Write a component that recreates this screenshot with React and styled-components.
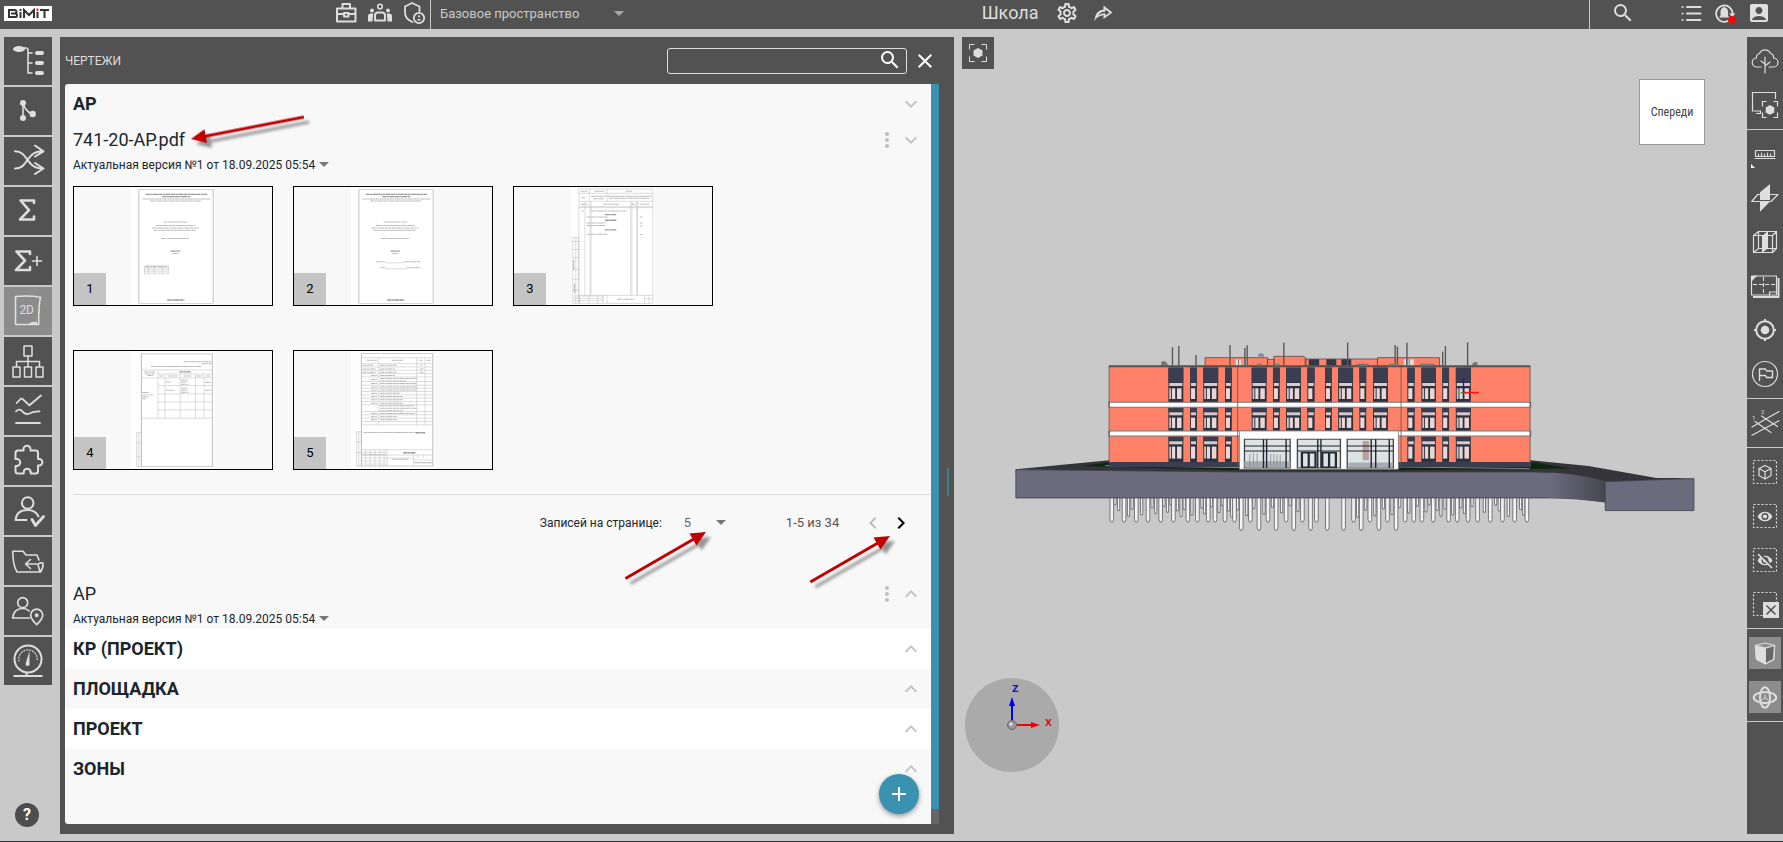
import React from 'react';
import styled, { createGlobalStyle } from 'styled-components';
import {
  MdAccountBox,
  MdAdd,
  MdChevronLeft,
  MdChevronRight,
  MdClose,
  MdExpandLess,
  MdExpandMore,
  MdMoreVert,
  MdOutlineSettings,
  MdSearch,
} from 'react-icons/md';

const GlobalStyle = createGlobalStyle`
  * {
    box-sizing: border-box;
  }

  body {
    margin: 0;
    font-family: Roboto, 'Liberation Sans', sans-serif;
    font-size: 12px;
    color: #1b262c;
    background: #c9c9c9;
  }

  button,
  input,
  select {
    font-family: inherit;
  }
`;

const Page = styled.div`
  position: relative;
  display: flex;
  flex-direction: column;
  min-height: 100vh;
  border-bottom: 1px solid #33363d;
`;

const Header = styled.header`
  display: grid;
  grid-template-columns: 431px minmax(0, 1fr) 45%;
  height: 29px;
  color: #dedede;
  background: #525252;
`;

const HeaderTools = styled.div`
  display: flex;
  align-items: center;
  gap: 10px;
  padding: 0 4px 4px;
  border-right: 1px solid #c9c9c9;
`;

const Logo = styled.a`
  display: block;
  width: 48px;
  height: 15px;
  margin: 2px auto 0 0;
`;

const HeaderSpace = styled.div`
  display: flex;
  align-items: center;
  padding: 0 0 2px 9px;
`;

const HeaderRight = styled.div`
  display: flex;
  justify-content: space-between;
`;

const Project = styled.div`
  display: flex;
  align-items: center;
  gap: 12px;
  padding: 0 0 3px 1px;
`;

const ProjectName = styled.h1`
  margin: 0 5px 0 0;
  font-size: 18px;
  line-height: 24px;
  font-weight: 400;
`;

const UserTools = styled.div`
  display: flex;
  align-items: center;
  gap: 10px;
  width: 194px;
  padding: 0 12px 4px 21px;
  border-left: 1px solid #c9c9c9;

  button:first-child {
    margin-right: auto;
  }
`;

const IconButton = styled.button`
  display: flex;
  align-items: center;
  justify-content: center;
  flex: none;
  width: 24px;
  height: 24px;
  padding: 0;
  border: 0;
  color: ${props => props.$color || 'inherit'};
  background: none;
  font-size: 24px;
  cursor: pointer;
`;

const SelectBox = styled.label`
  display: inline-flex;
  align-items: center;
  gap: ${props => props.$gap || '3px'};
  color: ${props => props.$color || '#1b262c'};

  select {
    margin: 0;
    padding: 0;
    border: 0;
    outline: 0;
    appearance: none;
    color: inherit;
    background: transparent;
    font-size: ${props => props.$size || '12px'};
    line-height: 18px;
    cursor: pointer;
  }
`;

const Main = styled.main`
  display: grid;
  grid-template-columns: 60px minmax(0, 41fr) minmax(0, 38fr);
  flex: 1;
`;

const Rail = styled.nav`
  display: flex;
  flex-direction: column;
  gap: 2px;
  padding: 8px 8px 14px 4px;
`;

const RailButton = styled.button`
  width: 48px;
  height: 48px;
  padding: 0;
  border: 0;
  color: #dedede;
  background: ${props => (props.$active ? '#8c8c8c' : '#525252')};
  cursor: pointer;
`;

const HelpButton = styled.button`
  width: 24px;
  height: 24px;
  margin: auto auto 0 11px;
  padding: 0;
  border: 0;
  border-radius: 50%;
  color: #fff;
  background: #4d4d4d;
  font-size: 16px;
  font-weight: 700;
  line-height: 24px;
  cursor: pointer;
`;

const Panel = styled.section`
  position: relative;
  display: flex;
  flex-direction: column;
  margin: 8px 0 7px;
  padding: 0 15px 10px 5px;
  background: #525252;
`;

const PanelHeader = styled.div`
  display: flex;
  align-items: center;
  gap: 6px;
  height: 47px;
  margin-right: 2px;
`;

const PanelTitle = styled.h2`
  margin: 0 auto 0 0;
  font-size: 12px;
  font-weight: 400;
  color: #dedede;
`;

const SearchBox = styled.div`
  display: flex;
  align-items: center;
  width: 240px;
  height: 26px;
  padding: 0 4px 2px 8px;
  border: 1px solid #dedede;
  border-radius: 3px;

  input {
    flex: 1;
    min-width: 0;
    border: 0;
    outline: 0;
    color: #fff;
    background: transparent;
    font-size: 13px;
  }
`;

const PanelBody = styled.div`
  display: flex;
  flex: 1;
`;

const Content = styled.div`
  position: relative;
  flex: 1;
  background: #f8f8f8;
  border-radius: 3px 0 0 3px;
`;

const ScrollTrack = styled.div`
  width: 8px;
  padding-bottom: 15px;
  background: #666;
`;

const ScrollThumb = styled.div`
  height: 100%;
  background: #3b92b0;
`;

const ResizeHandle = styled.div`
  position: absolute;
  top: 431px;
  right: 5px;
  width: 2px;
  height: 28px;
  background: #3b7f97;
`;

const GroupRow = styled.div`
  display: flex;
  align-items: center;
  justify-content: space-between;
  height: 40px;
  padding: 0 8px;
  background: ${props => (props.$light ? '#fff' : 'transparent')};
`;

const GroupName = styled.h3`
  margin: 0 0 2px;
  font-size: 18px;
  font-weight: 700;
`;

const FileHead = styled.div`
  display: flex;
  align-items: center;
  height: 32px;
  padding: 0 8px;
`;

const FileName = styled.h4`
  margin: 0 auto 2px 0;
  font-size: 18px;
  font-weight: 400;
`;

const FileVersion = styled.div`
  display: flex;
  align-items: center;
  height: 19px;
  padding: 0 8px 2px;
`;

const Sheets = styled.div`
  display: flex;
  flex-wrap: wrap;
  gap: 44px 20px;
  max-width: 800px;
  padding: 11px 8px 24px;
`;

const Sheet = styled.button`
  position: relative;
  display: flex;
  justify-content: center;
  width: 200px;
  height: 120px;
  padding: 0;
  border: 1px solid #000;
  background: transparent;
  cursor: pointer;
`;

const SheetNumber = styled.span`
  position: absolute;
  left: 0;
  bottom: 0;
  width: 32px;
  height: 32px;
  color: #000;
  background: #c4c4c4;
  font-size: 13px;
  line-height: 32px;
  text-align: center;
`;

const Pagination = styled.div`
  display: flex;
  align-items: center;
  justify-content: flex-end;
  height: 56px;
  margin: 0 0 28px 8px;
  padding-right: 18px;
  border-top: 1px solid #dcdcdc;
`;

const PageSize = styled.div`
  display: flex;
  align-items: center;
  gap: 22px;
  margin-right: 60px;
`;

const PageRange = styled.span`
  margin-right: 22px;
  font-size: 13px;
  color: #555;
`;

const PageButtons = styled.div`
  display: flex;
  gap: 4px;
`;

const AddButton = styled.button`
  position: absolute;
  right: 12px;
  bottom: 10px;
  display: flex;
  align-items: center;
  justify-content: center;
  width: 40px;
  height: 40px;
  padding: 0;
  border: 0;
  border-radius: 50%;
  color: #fff;
  background: #3b92b0;
  font-size: 24px;
  box-shadow: 0 2px 5px rgba(0, 0, 0, 0.4);
  cursor: pointer;
`;

const Viewer = styled.section`
  display: flex;
  padding-top: 8px;
`;

const Scene = styled.div`
  display: flex;
  flex-direction: column;
  flex: 1;
  min-width: 0;
  padding-bottom: 69px;
`;

const SceneTop = styled.div`
  display: flex;
  align-items: flex-start;
  justify-content: space-between;
  padding: 0 42px 0 8px;
`;

const FocusButton = styled.button`
  width: 32px;
  height: 32px;
  padding: 0;
  border: 0;
  color: #dedede;
  background: #525252;
`;

const ViewCube = styled.button`
  width: 66px;
  height: 66px;
  margin-top: 42px;
  padding: 0;
  border: 1px solid #999;
  color: #444;
  background: #fff;
  font-family: 'Roboto Condensed', Roboto, sans-serif;
  font-size: 12px;
`;

const Model = styled.div`
  margin: 185px 37px auto 46px;

  svg {
    display: block;
    width: 100%;
    height: auto;
  }
`;

const Compass = styled.div`
  width: 94px;
  height: 94px;
  margin-left: 11px;
  border-radius: 50%;
  background: #aaa;
`;

const Toolbar = styled.aside`
  width: 36px;
  margin-bottom: 7px;
  background: #525252;
`;

const ToolGroup = styled.div`
  display: flex;
  flex-direction: column;
  padding: 2px 0;
  border-bottom: 1px solid #c9c9c9;
`;

const Tool = styled.button`
  height: 44px;
  padding: 0;
  border: 0;
  color: #dedede;
  background: ${props => (props.$active ? 'linear-gradient(#8c8c8c, #8c8c8c) center / 32px 32px no-repeat' : 'none')};
  cursor: pointer;
`;

const Markers = styled.svg`
  position: absolute;
  top: 0;
  left: 0;
  width: 100%;
  height: 100%;
  pointer-events: none;
`;

const Line = ({ size = 48, height = size, width = 2, children }) => (
  <svg
    width={size}
    height={height}
    viewBox={`0 0 ${size} ${height}`}
    fill="none"
    stroke="currentColor"
    strokeWidth={width}
    strokeLinecap="round"
    strokeLinejoin="round"
    aria-hidden="true"
  >
    {children}
  </svg>
);

const Caret = () => (
  <svg width="10" height="5" viewBox="0 0 10 5" aria-hidden="true">
    <path d="M0 0h10L5 5z" fill="#777" />
  </svg>
);

const railItems = [
  {
    label: 'Структура',
    icon: (
      <>
        <ellipse cx="15" cy="12" rx="6" ry="3" fill="currentColor" stroke="none" />
        <path d="M19 11h3q2 0 2 2v23h4M24 16h4M24 26h4" strokeWidth="1.6" />
        <path d="M33 16h5M33 26h5M33 36h5" strokeWidth="4" />
      </>
    ),
  },
  {
    label: 'Ветви',
    icon: (
      <>
        <path d="M19 16v15M19 16q2 8 9 11" strokeWidth="1.6" />
        <g fill="currentColor" stroke="none">
          <circle cx="19" cy="16" r="3" />
          <circle cx="19" cy="31" r="3" />
          <circle cx="28.7" cy="27" r="3.2" />
        </g>
      </>
    ),
  },
  {
    label: 'Связи',
    icon: <path d="M11 14.3c14 0 10 17.2 28 17.2M11 31.5c14 0 10-17.2 28-17.2M31 8.5l8.5 5.8-8.5 5.2M31 26l8.5 5.5-8.5 5.5" />,
  },
  { label: 'Сумма', icon: <path d="M30 16v-2.500H16.500L25 23.200 16 32.500h14V29.500" strokeWidth="2.6" /> },
  {
    label: 'Добавить сумму',
    icon: (
      <>
        <path d="M26 17v-2.500H12.500L21 23.700 12 33h14V30" strokeWidth="2.6" />
        <path d="M28.500 24h9M33 19.500v9" strokeWidth="1.6" />
      </>
    ),
  },
  {
    label: 'Чертежи',
    active: true,
    icon: (
      <>
        <path d="M11.500 9.600Q24 8 36.500 10.300 34.500 18 34.700 37.500H11.500z" strokeWidth="1.6" />
        <path d="M24.500 37.500l1.500-2 7-1v3z" fill="currentColor" stroke="none" />
        <text x="22.700" y="27" textAnchor="middle" fontSize="12" fill="currentColor" stroke="none">
          2D
        </text>
      </>
    ),
  },
  {
    label: 'Схема',
    icon: (
      <path
        d="M20 9h8v10h-8zM24 19v11M12.500 30v-5.500h23V30M9 30h7v10H9zM20.500 30h7v10h-7zM32 30h7v10h-7z"
        strokeWidth="1.5"
      />
    ),
  },
  {
    label: 'Графики',
    icon: (
      <path d="M12.700 16L17 11.500l1.500.5 7 6.300L37 8.500M12 24.300q3-3 5.500-.8 4 5 8 3 4-2.300 10-2.200M12 36h24" strokeWidth="1.8" />
    ),
  },
  {
    label: 'Модули',
    icon: (
      <path d="M11.500 16q0-2.500 2.500-2.500h5.500v-1.200a3.300 3.300 0 0 1 7 0v1.200H32q2 0 2 2V22h1.200a3.200 3.200 0 0 1 0 6.400H34v5.800q0 2.300-2.300 2.300h-5v-1.300a3.400 3.400 0 0 0-7 0v1.300H14q-2.500 0-2.500-2.500v-5h1.200a3.500 3.500 0 0 0 0-7h-1.200z" />
    ),
  },
  {
    label: 'Согласование',
    icon: (
      <>
        <circle cx="23.700" cy="16" r="5.800" />
        <path d="M22.500 33h-11q1-10 12-10 8 0 11 6.500" />
        <path d="M28 32.500l3.500 6 8-9" strokeWidth="2.8" />
      </>
    ),
  },
  {
    label: 'Папки',
    icon: (
      <path
        d="M35 23l-2-5H22l-3-3.700H8.800q0 14 4.200 20.700h23.500q3-4 2.500-9-4-.5-5 1.500L36 35M33 27H21.500m5-4.500L21.500 27l5 4.500"
        strokeWidth="1.6"
      />
    ),
  },
  {
    label: 'Местоположение',
    icon: (
      <>
        <circle cx="18.700" cy="15.700" r="5" strokeWidth="1.7" />
        <path d="M25.500 31H8.700q1-9.500 10-9.500 4 0 6.500 2.500" strokeWidth="1.7" />
        <path d="M32.700 37.700q-6-6-6-9.500a6 6 0 0 1 12 0q0 3.500-6 9.500z" strokeWidth="1.7" />
        <circle cx="32.700" cy="28.300" r="1" />
      </>
    ),
  },
  {
    label: 'Показатели',
    icon: (
      <>
        <circle cx="24" cy="22" r="13.500" />
        <path d="M15 24a9.200 9.200 0 1 1 18 0" strokeWidth="1.2" strokeDasharray="1 2" />
        <path d="M25.500 14v12.500a2 2 0 1 1-3.800 0z" fill="currentColor" stroke="none" />
        <path d="M22.500 36v3M9.500 39h29" strokeLinecap="butt" />
      </>
    ),
  },
];

const dashedBox = <path d="M6.500 10.500h23v23h-23z" strokeWidth="1.2" strokeDasharray="2 2" strokeLinecap="butt" />;
const eye = (
  <>
    <path d="M10.500 22.500c3-6.300 12-6.300 15 0-3 6.300-12 6.300-15 0z" fill="currentColor" stroke="none" />
    <circle cx="18" cy="22.500" r="2.800" fill="currentColor" stroke="#525252" strokeWidth="1.4" />
  </>
);

const toolGroups = [
  [
    {
      label: 'Дерево',
      icon: (
        <path d="M14 28H10a4.500 4.500 0 0 1-.5-9 4 4 0 0 1 3-4.500 6 6 0 0 1 11 0 4 4 0 0 1 3 4.500 4.500 4.500 0 0 1 0 9H22M18 18v16M18 25l-4-3M18 27l5-4" />
      ),
    },
    {
      label: 'Фокус на экране',
      icon: (
        <g strokeLinecap="butt" strokeLinejoin="miter">
          <path d="M28.500 16V9.500h-23V28h8v2.500H9" />
          <path d="M15.500 23.500v-5h4M26.500 18.500h4v5M15.500 29.500v5h4M26.500 34.500h4v-5" />
          <path d="M23 22l4.300 2.400v5L23 31.800l-4.300-2.400v-5z" fill="currentColor" stroke="none" />
        </g>
      ),
    },
  ],
  [
    {
      label: 'Линейка',
      icon: (
        <>
          <path d="M8.500 18.500h19v6h-19zM8 26.500h20M11.500 22v2M14.500 21v3M17.500 22v2M20.500 21v3M23.500 22v2" />
          <path d="M4 32v4h4z" fill="#fff" stroke="none" />
        </>
      ),
    },
    {
      label: 'Плоскость сечения',
      icon: (
        <>
          <path d="M4.700 25.500l6-7H31l-7 7z" />
          <path d="M13 16.300L23 8v17.500L13 35.700z" fill="currentColor" stroke="none" />
          <path d="M13 24.500h10" stroke="#525252" />
        </>
      ),
    },
    {
      label: 'Объём сечения',
      icon: (
        <>
          <path d="M6.500 15.500h19v17h-19zM11.500 11.500h18v17h-18zM6.500 15.500l5-4M25.500 15.500l4-4M6.500 32.500l5-4M25.500 32.500l4-4" />
          <path d="M15 16l6-5v17.500l-6 4.200z" fill="currentColor" stroke="none" />
        </>
      ),
    },
    {
      label: 'План',
      icon: (
        <>
          <path d="M8 12h21.500v19h-25V16z" />
          <path d="M31.500 14v19H6" strokeWidth="2" strokeLinecap="butt" />
          <path d="M4.500 16.500V12H9z" fill="currentColor" />
          <path d="M6 20.500h23M16.500 13v17" strokeDasharray="4 2" strokeLinecap="butt" strokeWidth="1" />
          <path d="M22.500 31v-3h7" />
        </>
      ),
    },
    {
      label: 'Центр',
      icon: (
        <>
          <circle cx="18" cy="22" r="8.800" strokeWidth="2" />
          <circle cx="18" cy="22" r="4.300" fill="currentColor" stroke="none" />
          <path d="M18 11v3M18 30v3M7 22h3M26 22h3" strokeWidth="2" strokeLinecap="butt" />
        </>
      ),
    },
    {
      label: 'Замечания',
      icon: (
        <>
          <circle cx="18" cy="22" r="12.500" />
          <path d="M12.500 28.500V17h6l1 2h6v6.500h-6l-1-2h-6" strokeWidth="1.4" />
        </>
      ),
    },
  ],
  [
    {
      label: 'Оси',
      icon: (
        <>
          <path d="M5 34.300l27-14.500M5 26l27-15.500M8 20.500l16 11M14.500 15l16 10.500" />
          <g fill="currentColor" stroke="none" fontSize="6">
            <text x="5" y="19">
              1
            </text>
            <text x="14" y="13">
              2
            </text>
          </g>
        </>
      ),
    },
  ],
  [
    {
      label: 'Выделить',
      icon: (
        <>
          {dashedBox}
          <path d="M18 15.500l6 3v7L18 29l-6-3.500v-7zM12 18.500l6 3.200 6-3.200M18 21.700V29" strokeWidth="1.2" />
        </>
      ),
    },
    {
      label: 'Показать',
      icon: (
        <>
          {dashedBox}
          {eye}
        </>
      ),
    },
    {
      label: 'Скрыть',
      icon: (
        <>
          {dashedBox}
          {eye}
          <path d="M12 15l13 13" stroke="#525252" strokeWidth="2" />
          <path d="M11.500 16.500l13 13" strokeWidth="1.6" />
        </>
      ),
    },
    {
      label: 'Сбросить выделение',
      icon: (
        <>
          {dashedBox}
          <path d="M16 20h16v16H16z" fill="currentColor" stroke="none" />
          <path d="M20 24l8 8M28 24l-8 8" stroke="#525252" strokeWidth="1.6" />
        </>
      ),
    },
  ],
  [
    {
      label: 'Куб',
      active: true,
      icon: (
        <>
          <path d="M8.500 14.500L18 12l9.700 2.500-1 14-8.400 4.200-8.800-4.500z" />
          <path d="M8.500 14.500l9.800 2.700v15.500l-8.800-4.500z" fill="currentColor" />
          <path d="M18.300 17.200l9.200-2.700-1 14-8.200 4.200z" fill="#686868" />
        </>
      ),
    },
    {
      label: 'Вращение',
      active: true,
      icon: (
        <>
          <ellipse cx="18" cy="22.500" rx="11.200" ry="5.600" strokeWidth="2" />
          <ellipse cx="18" cy="22.500" rx="5" ry="10.200" strokeWidth="2" />
          <path d="M18 20v2.500l-3 2.500M18 22.500l3 2.500" strokeWidth="1" />
        </>
      ),
    },
  ],
];

// Repeated short strokes stand for the fine print on the sheet previews
const Print = ({ d, bold }) => (
  <path d={d} fill="none" stroke={bold ? '#999' : '#bbb'} strokeWidth={bold ? 4 : 3} strokeDasharray="9 1 5 1 12 1" />
);

const SheetFrame = ({ d }) => <path d={d} fill="none" stroke="#c2c2c2" strokeWidth="1.5" />;

const TitlePrint = () => (
  <>
    <rect x="182" y="57" width="171" height="343" rx="2" fill="#fff" stroke="#c8c8c8" strokeWidth="2.5" />
    <Print bold d="M198 72h141M236 79h64" />
    <Print d="M191 86h156M208 92h118M221 166h90M212 173h108M216 180h98M233 205h64" />
    <Print d="M239 155h54" />
    <Print bold d="M255 243h22M247 390h40" />
    <Print d="M259 250h14" />
  </>
);

const sheets = [
  <>
    <TitlePrint />
    <SheetFrame d="M195 287h55v24h-55zM195 293h55M195 299h55M195 305h55M204 287v24M217 287v24M236 287v24" />
    <Print d="M197 290h50" />
  </>,
  <>
    <TitlePrint />
    <Print d="M222 275h20M286 275h37M232 293h12M292 293h31" />
    <SheetFrame d="M242 278h45M244 296h48" />
  </>,
  <>
    <rect x="182" y="56" width="170" height="344" fill="#fff" />
    <SheetFrame d="M182 56h170v344H182zM182 69h170M182 93h170M182 109h170M182 112h170M182 376h170M206 56v37M247 56v37M196 93v283M208 93v283M210 93v283M301 93v283M304 93v283M315 93v283M317 93v283" />
    <SheetFrame d="M168 202h14v198h-14zM175 202v198M168 214h14M168 238h14M168 262h14M168 298h14M168 328h14M168 360h14M170 378h70M170 385h70M170 392h70M184 376v24M205 376v24M225 376v24M237 376v24M247 376v24M333 376v24M343 376v24M333 386h19" />
    <Print d="M186 63h15M218 63h22M290 63h16M188 82h10M210 78h36M215 85h24M248 78h102M252 84h92M186 102h18M238 102h36M304 102h8M322 102h22" />
    <Print d="M188 122h6M210 122h82M200 140h8M210 140h38M200 158h8M210 158h33M200 166h8M210 166h33M200 192h8M210 192h38M322 140h6M322 158h6M322 167h6M322 193h6M270 388h40M170 270v30M172 340v30" />
    <Print bold d="M242 133h26M242 150h26M242 179h26" />
  </>,
  <>
    <rect x="188" y="59" width="163" height="339" fill="#fff" stroke="#c2c2c2" strokeWidth="2.5" />
    <SheetFrame d="M188 107h163M188 131h163M226 119h125M226 154h125M226 179h125M226 203h125M226 227h125M188 252h163M226 107v145M242 119v133M277 119v133M312 119v133M332 119v133M177 295h11v103h-11zM182 295v103M177 326h11M177 368h11" />
    <Print d="M285 82h64M327 88h22M210 97h116M194 113h26M196 119h22M202 124h12M229 125h10M250 125h20M285 125h18M314 125h14M337 125h10M244 143h12M279 137h16M279 143h14M279 150h18M334 144h14M244 168h20M279 162h16M279 168h14M279 174h18M334 168h14M190 175h14M190 182h26M190 188h14M190 194h10" />
    <Print bold d="M275 113h26" />
  </>,
  <>
    <rect x="188" y="58" width="164" height="338" fill="#fff" stroke="#c2c2c2" strokeWidth="2.5" />
    <SheetFrame d="M188 70h164M188 88h164M188 98h164M188 108h164M188 118h164M188 128h164M188 142h164M188 153h164M188 162h164M188 172h164M188 182h164M188 192h164M188 202h164M188 212h164M188 232h164M188 242h164M188 252h164M188 262h164M188 272h164M228 70v202M315 70v202M334 70v202" />
    <SheetFrame d="M188 347h164M188 355h58M188 363h164M188 372h120M188 381h58M188 390h58M198 347v49M208 347v49M219 347v49M230 347v49M240 347v49M247 347v49M308 363v33M308 378h44M308 386h44M317 363v10M331 363v10M177 293h11v103h-11zM182 293v103M177 323h11M177 356h11" />
    <Print d="M200 78h24M258 78h26M320 78h8M338 78h10M191 93h24M191 104h30M191 114h30M231 93h38M231 104h34M231 114h38M324 93h4M322 104h8M322 114h8M210 124h14M231 124h34M210 136h14M231 133h84M231 140h60M210 148h14M231 148h84M210 158h14M231 158h84M210 167h14M231 167h84M210 177h14M231 177h46M210 187h14M231 187h52M210 197h14M231 197h52M210 207h14M231 207h52M231 215h78M231 222h84M231 230h52M210 238h14M231 238h80M210 248h14M231 248h40M210 257h14M231 257h40M193 295h118M190 362h54M258 376h38M310 386h40" />
    <Print bold d="M284 356h28M312 296h22" />
  </>,
];

const Preview = ({ index }) => (
  <svg width="84" height="118" viewBox="164 50 193 355" preserveAspectRatio="none" aria-hidden="true">
    <path d="M164 50h193v355H164z" fill="#fdfdfd" />
    {sheets[index]}
  </svg>
);

const bays = [
  [372, 33], [420, 15], [449, 33], [497, 15], [556, 33], [603, 15], [632, 33], [679, 16],
  [718, 15], [747, 33], [794, 15], [824, 33], [900, 16], [931, 32], [977, 15], [1007, 33],
];
const floors = [
  [113, 157, 217],
  [233, 245, 304],
  [320, 332, 396],
];
const masts = [
  [381, 52], [395, 48], [433, 75], [508, 45], [541, 54], [546, 46], [627, 38], [768, 37],
  [873, 45], [878, 50], [899, 38], [978, 65], [984, 48], [1033, 37],
];
const longPiles = [533, 572, 610, 649, 686, 723, 759, 798, 837, 875];
const piles = [
  247, 274, 301, 327, 355, 383, 415, 436, 460, 475, 497, 518, 553, 592, 632, 668, 699, 781, 817, 856,
  895, 914, 932, 957, 991, 1010, 1034, 1055, 1083, 1110, 1137, 1164,
];
const rearPiles = [
  254, 262, 284, 292, 313, 336, 344, 362, 370, 378, 392, 400, 407, 424, 446, 452, 467, 484, 491, 505, 512, 525,
  545, 561, 583, 602, 622, 641, 658, 790, 808, 828, 847, 866, 883, 903, 922, 941, 948, 966, 974, 983, 1000, 1018,
  1026, 1043, 1070, 1095, 1103, 1123, 1150, 1157,
];

const Pile = ({ x, end, width = 8 }) => (
  <path
    d={`M${x - width / 2} 500V${end - 7}L${x - 2} ${end}H${x + 2}L${x + width / 2} ${end - 7}V500z`}
    fill="#f4f4f4"
    stroke="#5a5a5a"
    strokeWidth="2"
  />
);

const BuildingWindow = ({ x, width, floor: [top, glass, bottom] }) => (
  <>
    <path d={`M${x} ${top}h${width}V${bottom}h${-width}z`} fill="#2d303d" />
    <path d={`M${x} ${top}h${width}V${glass}h${-width}z`} fill="#3b3e50" />
    <path d={`M${x + 2} ${glass + 2}h${width - 4}v9h${4 - width}z`} fill="#d6cccd" />
    {width > 20 ? (
      <>
        <path d={`M${x + 2} ${glass + 18}h4v${bottom - glass - 28}h-4z`} fill="#c9c3c6" />
        <path d={`M${x + 8} ${glass + 18}h7v${bottom - glass - 28}h-7z`} fill="#ead8d8" />
        <path d={`M${x + 19} ${glass + 18}h10v${bottom - glass - 28}h-10z`} fill="#e8d6d6" />
      </>
    ) : (
      <path d={`M${x + 2} ${glass + 18}h9v${bottom - glass - 28}h-9z`} fill="#ead8d8" />
    )}
  </>
);

const Building = () => (
  <svg viewBox="0 0 710 210" role="img" aria-label="Модель здания">
    <g transform="scale(.4528 .3333)">
      {rearPiles.map((x, i) => (
        <Pile key={x} x={x} end={525 + ((i * 17) % 38)} width={5} />
      ))}
      {piles.map(x => (
        <Pile key={x} x={x} end={576} />
      ))}
      {longPiles.map(x => (
        <Pile key={x} x={x} end={601} />
      ))}
      <path d="M35 418L241 391H1172L1300 408 1450 444H1533L1337 460 1210 430H35z" fill="#35343a" />
      <path d="M180 408L241 398H1180L1262 416 880 421H530z" fill="#0b270f" />
      <path d="M232 407L530 413M880 411l290 5" stroke="#9aa6a0" strokeWidth="2" />
      <path d="M35 419L530 426H1180Q1290 432 1340 457V517Q1270 504 1215 504H35z" fill="#6c6b7e" stroke="#3f3f49" strokeWidth="2" />
      <path d="M1215 428Q1300 436 1340 457V517Q1270 504 1215 504z" fill="url(#slab)" />
      <path d="M1337 455L1533 446V542H1337z" fill="#6c6b7e" stroke="#3f3f49" strokeWidth="2" />
      <g stroke="#5b4944" strokeWidth="2" fill="#ff8268">
        <path d="M453 83h138v25H453zM591 88h15v20h-15zM674 87h160v21H674zM834 83h137v25H834zM605 79h66l5 6v24h-71z" />
      </g>
      <path d="M682 88h23v20h-23zM721 88h22v20h-22zM754 88h22v20h-22z" fill="#343746" />
      <path d="M521 88h12v19h-12zM538 88h8v19h-8zM892 88h22v19h-22z" fill="#ddd" />
      <path d="M527 88v19M542 88v19M898 88v19M904 88v19" stroke="#555" strokeWidth="2" />
      <path d="M570 80v-7q7-6 13 0v7z" fill="#88889f" />
      <path d="M356 108V96q6-8 14 4v8zM1042 108q2-16 13-11v11z" fill="#777" />
      {masts.map(([x, y]) => (
        <path key={x} d={`M${x} ${y}V108`} stroke="#565656" strokeWidth="3" />
      ))}
      <path d="M241 107H1171V398H241z" fill="#ff8268" />
      <path d="M241 396H1172V411H241z" fill="#3b3e50" />
      <path d="M241 109H1171" stroke="#565350" strokeWidth="6" />
      <path d="M568 104h10M608 104h10M788 104h26M860 104h20M928 104h32" stroke="#777" strokeWidth="6" />
      {floors.map(floor => bays.map(([x, width]) => <BuildingWindow key={`${x}-${floor[0]}`} x={x} width={width} floor={floor} />))}
      <path d="M241 217H1172V232H241zM241 303H1172V318H241z" fill="#fff" stroke="#777" strokeWidth="3" />
      <path d="M241 108V398M1171 108V411M525 108V411M886 108V411" stroke="#5e524f" strokeWidth="2" />
      <path d="M529 303H880V418H529z" fill="#fff" stroke="#887b76" strokeWidth="2" />
      <path d="M540 328h101v86H540zM657 328h95v86h-95zM767 328h102v86H767z" fill="#dde2e3" stroke="#454a52" strokeWidth="3" />
      <path d="M540 394h101v18H540zM770 398h97v14h-97z" fill="#a5adb2" />
      <path d="M552 372v38M560 368v42M568 370v40M598 372v38M605 372v38M612 374v36M619 374v36" stroke="#838a8f" strokeWidth="2" />
      <path d="M801 333h14v58h-14z" fill="#baa09c" />
      <path d="M540 348h101M540 363h101M582 328v86M589 328v86M632 328v86M657 348h95M657 363h95M702 328v86M709 328v86M767 348h102M767 363h102M820 328v86M830 328v86M860 328v86" stroke="#20242e" strokeWidth="3" />
      <path d="M667 368h30v44h-30zM712 368h30v44h-30zM682 368v44M727 368v44" fill="none" stroke="#252933" strokeWidth="5" />
      <path d="M1024 145V188" stroke="#1515d8" strokeWidth="3" />
      <path d="M1024 188H1058" stroke="#f01818" strokeWidth="5" />
      <path d="M1018 188h6" stroke="#16a321" strokeWidth="4" />
    </g>
    <defs>
      <linearGradient id="slab">
        <stop offset="0" stopColor="#6c6b7e" />
        <stop offset="1" stopColor="#45454f" />
      </linearGradient>
    </defs>
  </svg>
);

const Arrow = ({ x, y, length, angle }) => (
  <g transform={`translate(${x} ${y}) rotate(${angle})`}>
    <path d={`M-12 0H${-length}`} stroke="currentColor" strokeWidth="3" />
    <path d="M0 0L-15 -7V7z" fill="currentColor" />
  </g>
);

const arrows = [
  { x: 191, y: 139, length: 115, angle: 169 },
  { x: 706, y: 532, length: 93, angle: -30 },
  { x: 890, y: 536, length: 92, angle: -30 },
];

const Version = () => (
  <FileVersion>
    <SelectBox>
      <select aria-label="Версия файла">
        <option>Актуальная версия №1 от 18.09.2025 05:54</option>
      </select>
      <Caret />
    </SelectBox>
  </FileVersion>
);

const Group = ({ name, light, open }) => (
  <GroupRow $light={light}>
    <GroupName>{name}</GroupName>
    <IconButton $color="#c4c4c4" aria-label={`Раздел ${name}`}>
      {open ? <MdExpandMore /> : <MdExpandLess />}
    </IconButton>
  </GroupRow>
);

const File = ({ name, open }) => (
  <>
    <FileHead>
      <FileName>{name}</FileName>
      <IconButton $color="#bdbdbd" aria-label="Действия">
        <MdMoreVert />
      </IconButton>
      <IconButton $color="#c4c4c4" aria-label={`Файл ${name}`}>
        {open ? <MdExpandMore /> : <MdExpandLess />}
      </IconButton>
    </FileHead>
    <Version />
  </>
);

const AppHeader = () => (
  <Header>
    <HeaderTools>
      <Logo href="#" aria-label="BiMiT">
        <svg width="48" height="15" viewBox="0 0 48 15" aria-hidden="true">
          <path d="M0 0h48v15H0z" fill="#fff" />
          <g fill="none" stroke="#333" strokeWidth="2">
            <path d="M5 3v9M4 4h6.500q2 0 2 1.800t-2 1.800H7m4 0q2 0 2 1.800T11 11H4M16.500 6v6M20 12V4l5 5 5-5v8M33.500 6v6M36 4h9M40.500 4v8" />
          </g>
          <path d="M15.500 3h2v2h-2z" fill="#333" />
          <path d="M32.500 2.500h2v2.500h-2z" fill="#e52222" />
        </svg>
      </Logo>
      <IconButton aria-label="Портфель">
        <Line size={24}>
          <path d="M3 7.500h18.500V20.500H3zM8.500 7V3h7.500v4M3 13h6.500M15 13h6.500M10 12h4.500v3.500H10z" />
        </Line>
      </IconButton>
      <IconButton aria-label="Команда">
        <Line size={24}>
          <circle cx="12" cy="5.500" r="2.300" strokeWidth="1.6" />
          <path d="M7 19.500v-5q0-3 3-3h4q3 0 3 3v5z" />
          <g fill="currentColor" stroke="none">
            <circle cx="4" cy="9.500" r="2" />
            <circle cx="20" cy="9.500" r="2" />
            <path d="M0 20.500V15q0-2.500 3-2.500h2.200L4.500 20.500zM24 20.500V15q0-2.500-3-2.500h-2.200l.7 8z" />
          </g>
        </Line>
      </IconButton>
      <IconButton aria-label="Права доступа">
        <Line size={24} width={1.8}>
          <path d="M17.500 10V5.500L10 2 3 5.500v6q0 6.500 7.500 9.500" />
          <circle cx="17" cy="17" r="5.200" />
          <circle cx="17" cy="15.300" r="1.100" fill="currentColor" stroke="none" />
          <path d="M14.500 19.500q2.500-3.500 5 0z" fill="currentColor" stroke="none" />
        </Line>
      </IconButton>
    </HeaderTools>
    <HeaderSpace>
      <SelectBox $size="13px" $gap="34px" $color="#c9c9c9">
        <select aria-label="Пространство">
          <option>Базовое пространство</option>
        </select>
        <svg width="10" height="5" viewBox="0 0 10 5" aria-hidden="true">
          <path d="M0 0h10L5 5z" fill="#aaa" />
        </svg>
      </SelectBox>
    </HeaderSpace>
    <HeaderRight>
      <Project>
        <ProjectName>Школа</ProjectName>
        <IconButton aria-label="Настройки">
          <MdOutlineSettings />
        </IconButton>
        <IconButton aria-label="Поделиться">
          <svg width="24" height="24" viewBox="0 0 24 24" fill="currentColor" aria-hidden="true">
            <path d="M3 20.500Q4.500 9 12.500 8.500V4.500L21.500 11.500 12.500 18v-3.700Q6.500 14.500 3 20.500zM7 14.500q3-2.500 7.500-2v2l4-3-4-3v2q-5 0-7.500 4z" fillRule="evenodd" />
          </svg>
        </IconButton>
      </Project>
      <UserTools>
        <IconButton aria-label="Поиск по проекту">
          <MdSearch />
        </IconButton>
        <IconButton aria-label="Список">
          <Line size={24}>
            <path d="M8 6h13.500M8 12.500h13.500M8 19h13.500M3.500 6h.1M3.500 12.500h.1M3.500 19h.1" />
          </Line>
        </IconButton>
        <IconButton aria-label="Уведомления">
          <Line size={24} width={1.8}>
            <path d="M15 20a8.200 8.200 0 1 1 4.500-7" />
            <path d="M6 16.500l1.500-2V11q0-4 3-4.500 0-2 1.500 0 3 .5 3 4.500v3.500l1.500 2zM10 18h2.500zM16 12.500h6.500l-3.200 3.500z" fill="currentColor" stroke="none" />
            <circle cx="19" cy="19" r="4" fill="#f50808" stroke="none" />
          </Line>
        </IconButton>
        <IconButton aria-label="Профиль">
          <MdAccountBox />
        </IconButton>
      </UserTools>
    </HeaderRight>
  </Header>
);

const DrawingsPanel = () => (
  <Panel>
    <PanelHeader>
      <PanelTitle>ЧЕРТЕЖИ</PanelTitle>
      <SearchBox>
        <input type="text" aria-label="Поиск чертежей" />
        <IconButton $color="#fff" aria-label="Найти">
          <MdSearch />
        </IconButton>
      </SearchBox>
      <IconButton $color="#fff" aria-label="Закрыть">
        <MdClose />
      </IconButton>
    </PanelHeader>
    <PanelBody>
      <Content>
        <Group name="АР" open />
        <File name="741-20-АР.pdf" open />
        <Sheets>
          {sheets.map((sheet, i) => (
            <Sheet key={i}>
              <Preview index={i} />
              <SheetNumber>{i + 1}</SheetNumber>
            </Sheet>
          ))}
        </Sheets>
        <Pagination>
          <PageSize>
            <label htmlFor="page-size">Записей на странице:</label>
            <SelectBox $size="13px" $gap="24px" $color="#666">
              <select id="page-size">
                <option>5</option>
              </select>
              <Caret />
            </SelectBox>
          </PageSize>
          <PageRange>1-5 из 34</PageRange>
          <PageButtons>
            <IconButton $color="#bdbdbd" aria-label="Назад">
              <MdChevronLeft />
            </IconButton>
            <IconButton $color="#000" aria-label="Вперёд">
              <MdChevronRight />
            </IconButton>
          </PageButtons>
        </Pagination>
        <File name="АР" />
        <Group name="КР (ПРОЕКТ)" light />
        <Group name="ПЛОЩАДКА" />
        <Group name="ПРОЕКТ" light />
        <Group name="ЗОНЫ" />
        <AddButton aria-label="Добавить">
          <MdAdd />
        </AddButton>
      </Content>
      <ScrollTrack>
        <ScrollThumb />
      </ScrollTrack>
    </PanelBody>
    <ResizeHandle />
  </Panel>
);

const App = () => (
  <Page>
    <GlobalStyle />
    <AppHeader />
    <Main>
      <Rail>
        {railItems.map(({ label, icon, active }) => (
          <RailButton key={label} $active={active} aria-label={label}>
            <Line>{icon}</Line>
          </RailButton>
        ))}
        <HelpButton aria-label="Справка">?</HelpButton>
      </Rail>
      <DrawingsPanel />
      <Viewer>
        <Scene>
          <SceneTop>
            <FocusButton aria-label="Показать всё">
              <Line size={32} width={1}>
                <path d="M7.500 12.500v-5h5M19.500 7.500h5v5M7.500 19.500v5h5M19.500 24.500h5v-5" strokeLinecap="butt" />
                <path d="M16 11l4.500 2.500v5L16 21l-4.500-2.500v-5z" fill="currentColor" stroke="none" />
              </Line>
            </FocusButton>
            <ViewCube>Спереди</ViewCube>
          </SceneTop>
          <Model>
            <Building />
          </Model>
          <Compass>
            <svg width="94" height="94" viewBox="0 0 94 94" role="img" aria-label="Оси координат">
              <path d="M47 47V27" stroke="#0000f5" strokeWidth="2" />
              <path d="M47 19l3 9h-6z" fill="#0000f5" />
              <path d="M47 47h20" stroke="#f50000" strokeWidth="2" />
              <path d="M75 47l-9 3v-6z" fill="#f50000" />
              <circle cx="47" cy="47" r="4.500" fill="#999" stroke="#666" />
              <circle cx="46" cy="46" r="1.500" fill="#eee" />
              <g fontFamily="DejaVu Sans" fontSize="9" fontWeight="700">
                <text x="47" y="14" fill="#1515c8">
                  Z
                </text>
                <text x="80" y="48" fill="#e01010">
                  X
                </text>
              </g>
            </svg>
          </Compass>
        </Scene>
        <Toolbar>
          {toolGroups.map((group, i) => (
            <ToolGroup key={i}>
              {group.map(({ label, icon, active }) => (
                <Tool key={label} $active={active} aria-label={label}>
                  <Line size={36} height={44} width={1.2}>
                    {icon}
                  </Line>
                </Tool>
              ))}
            </ToolGroup>
          ))}
        </Toolbar>
      </Viewer>
    </Main>
    <Markers aria-hidden="true">
      <defs>
        <filter id="soft" x="-20%" y="-20%" width="140%" height="140%">
          <feGaussianBlur stdDeviation="1.5" />
        </filter>
      </defs>
      <g color="#000" opacity=".4" filter="url(#soft)" transform="translate(5 5)">
        {arrows.map(arrow => (
          <Arrow key={arrow.x} {...arrow} />
        ))}
      </g>
      <g color="#c00000">
        {arrows.map(arrow => (
          <Arrow key={arrow.x} {...arrow} />
        ))}
      </g>
    </Markers>
  </Page>
);

export default App;
